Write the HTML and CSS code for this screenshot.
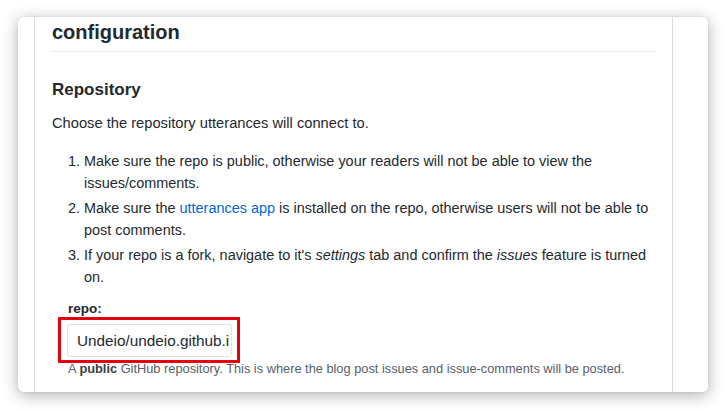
FILE: index.html
```html
<!DOCTYPE html>
<html lang="en">
<head>
<meta charset="utf-8">
<title>configuration</title>
<link rel="stylesheet" href="styles.css">
</head>
<body>
<div class="window">
  <div class="gutter"></div>
  <main class="main">
    <h2 class="title">configuration</h2>
    <h3 class="subtitle">Repository</h3>
    <p class="lead">Choose the repository utterances will connect to.</p>
    <ol class="steps">
      <li>Make sure the repo is public, otherwise your readers will not be able to view the issues/comments.</li>
      <li>Make sure the <a class="link" href="#">utterances app</a> is installed on the repo, otherwise users will not be able to post comments.</li>
      <li>If your repo is a fork, navigate to it's <em>settings</em> tab and confirm the <em>issues</em> feature is turned on.</li>
    </ol>
    <div class="form">
      <label class="label" for="repo">repo:</label>
      <div class="highlight">
        <input class="input" id="repo" type="text" value="Undeio/undeio.github.io">
      </div>
      <p class="note">A <strong>public</strong> GitHub repository. This is where the blog post issues and issue-comments will be posted.</p>
    </div>
  </main>
  <div class="side"></div>
</div>
</body>
</html>
```

FILE: styles.css
```css
html, body {
  margin: 0;
  padding: 0;
  background: #ffffff;
  height: 100%;
  overflow: hidden;
}

body {
  font-family: "Liberation Sans", Arial, sans-serif;
  color: #24292e;
}

.window {
  margin: 17px 18px 0 18px;
  height: 375px;
  background: #ffffff;
  border-radius: 5px;
  box-shadow: 0 3px 16px rgba(0, 0, 0, 0.32), 0 0 1px rgba(0, 0, 0, 0.25);
  display: flex;
  overflow: hidden;
}

.gutter {
  flex: none;
  width: 16px;
}

.main {
  flex: none;
  width: 639px;
  box-sizing: border-box;
  border-left: 1px solid #d8dce1;
  border-right: 1px solid #d8dce1;
  padding: 3px 16px 0 17px;
  overflow: hidden;
}

.side {
  flex: 1;
}

.title {
  margin: 0;
  font-size: 20px;
  line-height: 25px;
  font-weight: 700;
  padding-bottom: 6px;
  border-bottom: 1px solid #eaecef;
}

.subtitle {
  margin: 27px 0 12px;
  font-size: 17px;
  line-height: 21px;
  font-weight: 700;
}

.lead {
  margin: 0 0 16px;
  font-size: 14.7px;
  line-height: 22px;
}

.steps {
  margin: 0 0 12px;
  padding-left: 32px;
  font-size: 14.45px;
  line-height: 22px;
}

.steps li + li {
  margin-top: 3px;
}

.link {
  color: #0366d6;
  text-decoration: none;
}

.form {
  padding-left: 15px;
}

.label {
  display: block;
  padding-left: 1px;
  margin-bottom: 6px;
  font-size: 13.5px;
  line-height: 18px;
  font-weight: 700;
}

.highlight {
  display: inline-block;
  vertical-align: top;
  border: 3px solid #e5000f;
  padding: 4px 5px 3px 6px;
  margin: -7px 0 -6px -9px;
}

.input {
  display: block;
  box-sizing: border-box;
  width: 165px;
  height: 33px;
  margin: 0;
  padding: 0 2px 0 9px;
  border: 1px solid #dfe2e5;
  border-radius: 3px;
  background: #ffffff;
  color: #24292e;
  font-family: "Liberation Sans", Arial, sans-serif;
  font-size: 15.3px;
  outline: none;
}

.note {
  margin: 3px 0 0 1px;
  font-size: 12.8px;
  line-height: 18px;
  color: #586069;
}

.note strong {
  color: #3b4046;
}
```
